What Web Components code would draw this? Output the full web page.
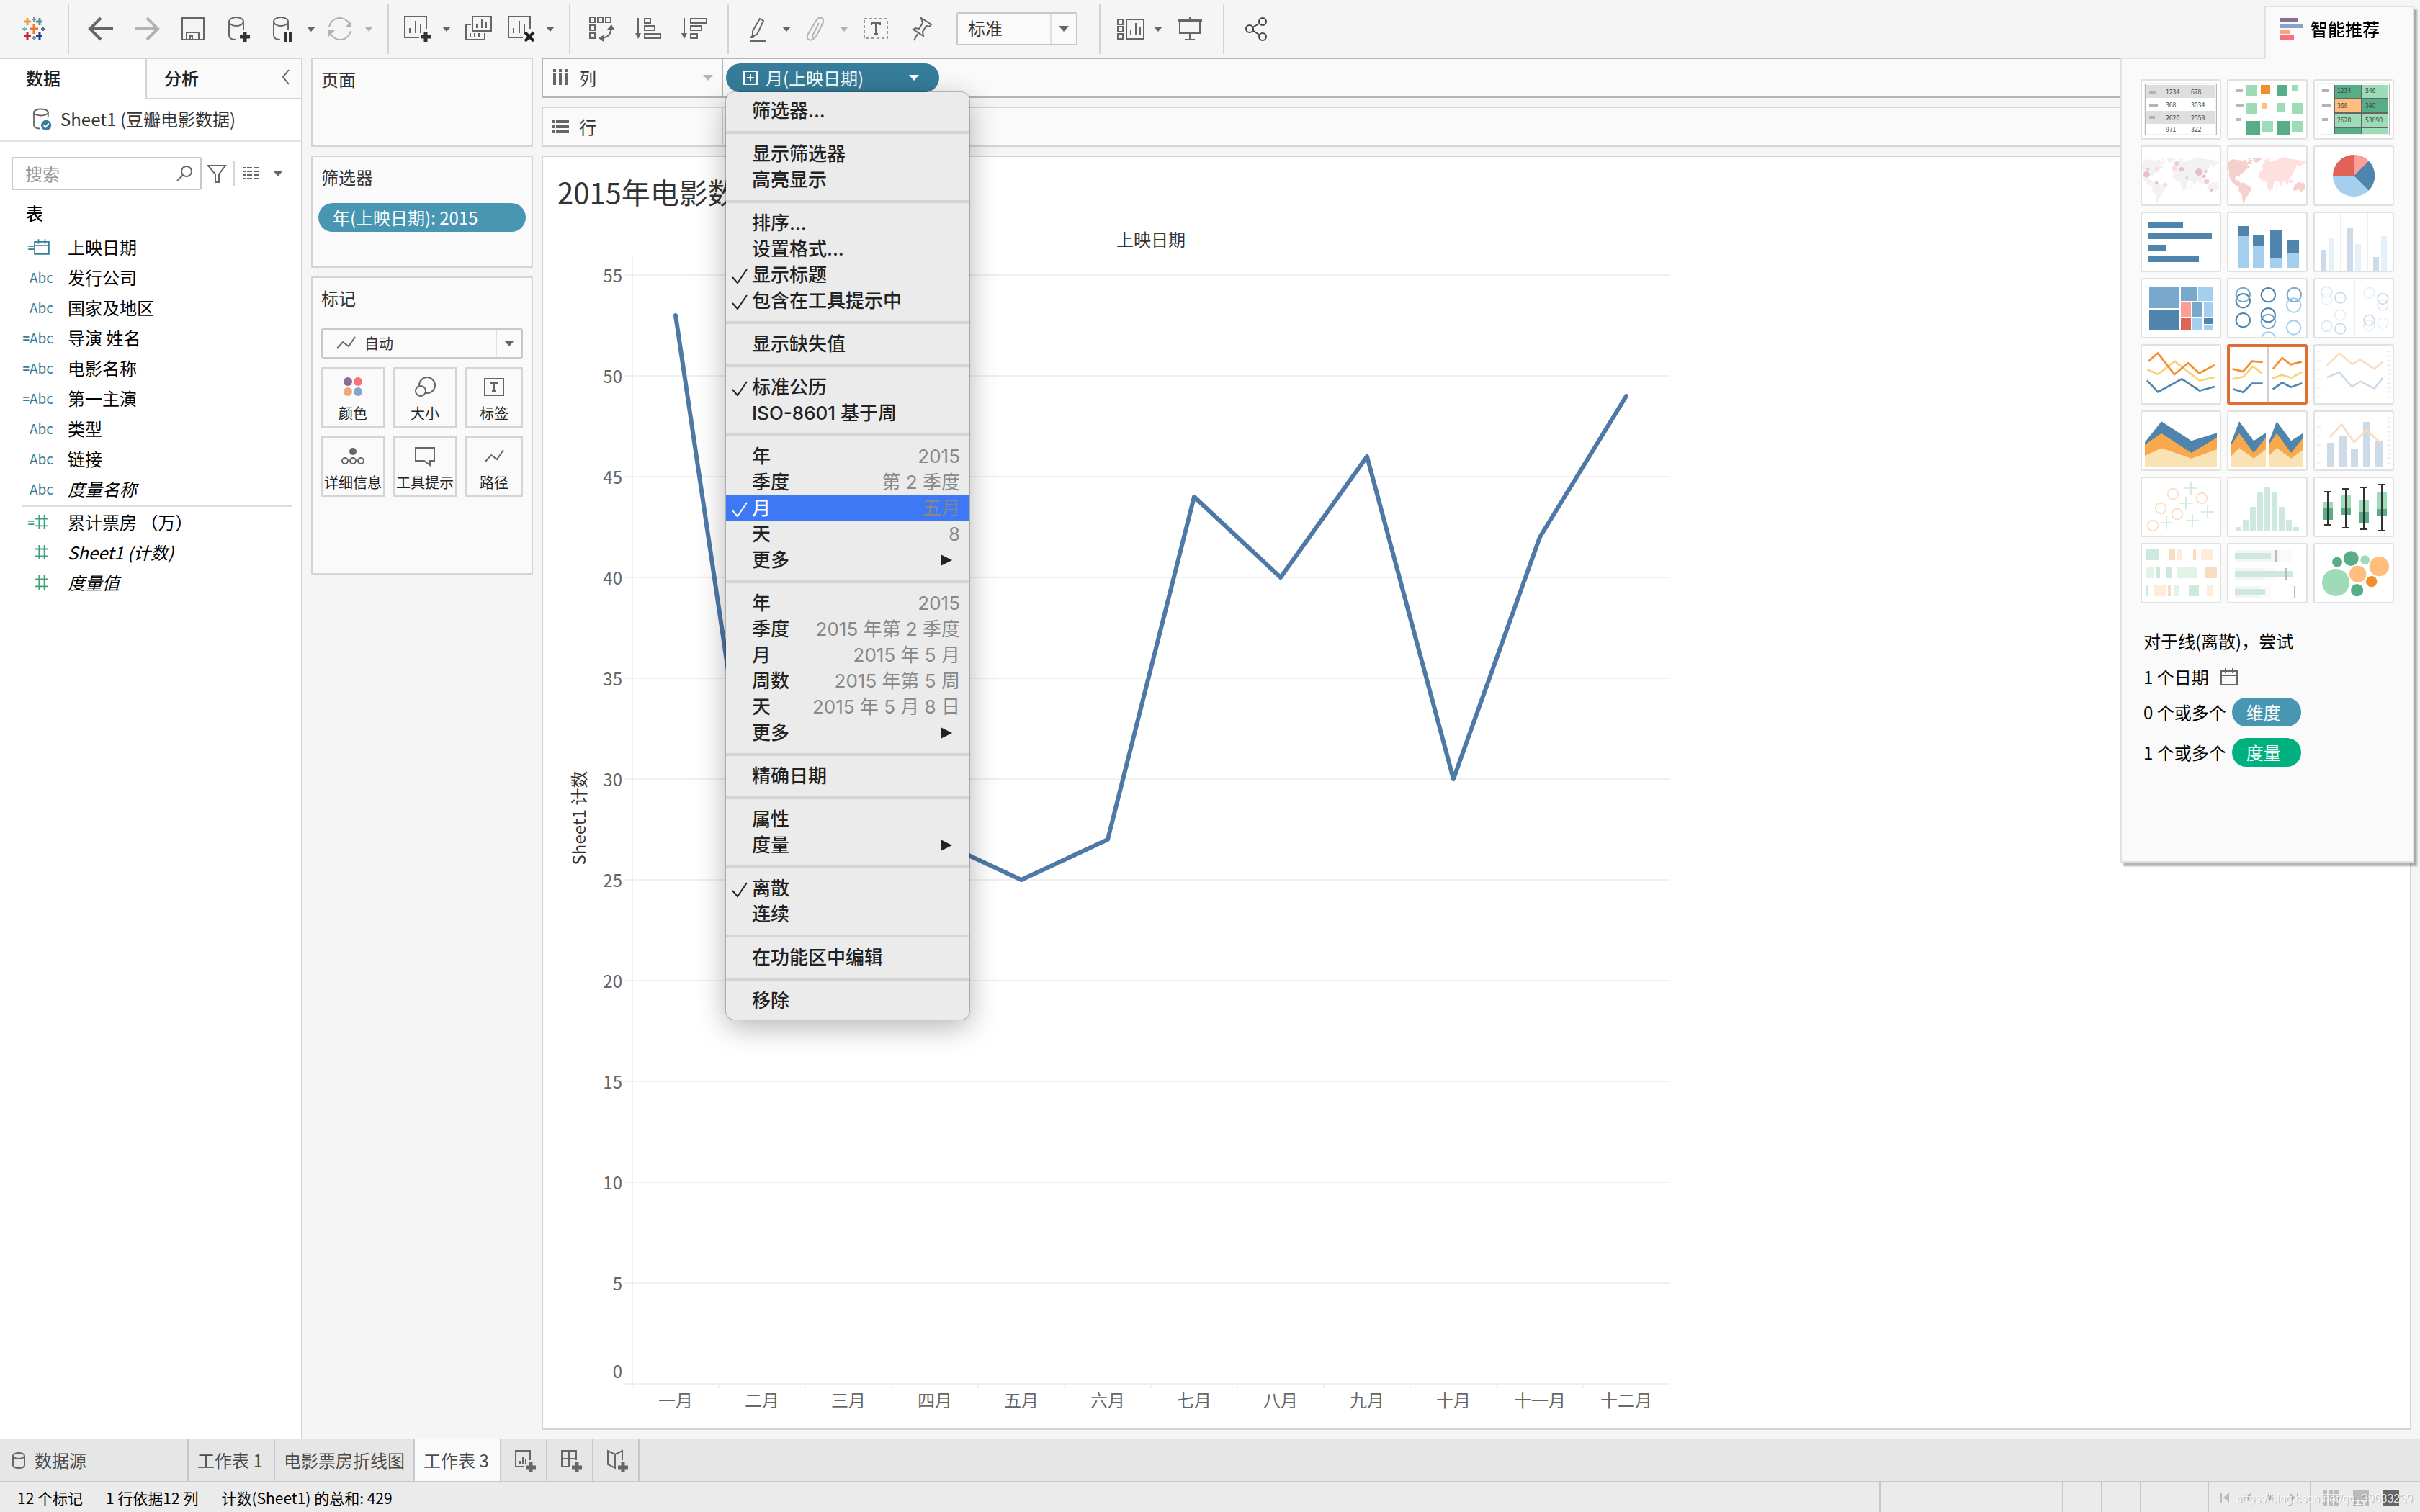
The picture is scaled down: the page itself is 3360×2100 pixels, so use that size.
<!DOCTYPE html>
<html lang="zh-CN">
<head>
<meta charset="utf-8">
<title>工作表 3</title>
<style>
  html, body {
    margin: 0;
    padding: 0;
  }
  body {
    font-family: "Noto Sans CJK SC", "Open Sans", sans-serif;
    font-size: 24px;
    line-height: 32px;
    color: #333;
    background: #f5f5f5;
    --line: #d4d4d4;
    --card: #fafafa;
    --pill-blue: #4996b2;
    --pill-green: #00b180;
    --icon: #666;
  }
</style>
</head>
<body>
<workbook-app></workbook-app>

<script>
/* ---------- icons ---------- */

const PLUS = (x, y, c = '#333') => `<path d="M${x - 7} ${y}h14M${x} ${y - 7}v14" stroke="${c}" stroke-width="5"/>`
const CYLINDER = `<ellipse cx="16" cy="10" rx="10" ry="6"/><path d="M6 10v19q0 6 9 6M26 10v12"/>`
const SHEET = `<path d="M32 20V3H2v29h20"/><path d="M9 19v7M17 9v17M24 13v13" stroke-width="2"/>`

const ICONS = {
  logo: `<g stroke-width="3">
    <path d="M14 20h12M20 13v14" stroke="#eb7a2c"/>
    <path d="M7 10h9M11 5v10" stroke="#f09a37"/><path d="M23 10h9M28 5v10" stroke="#5b8d9e"/>
    <path d="M7 30h9M11 25v10" stroke="#c8213c"/><path d="M23 30h9M28 25v10" stroke="#1f457e"/>
    <path d="M17 7h6M20 4v6" stroke="#7199a6" stroke-width="2"/><path d="M17 33h6M20 30v6" stroke="#8a8fb5" stroke-width="2"/>
    <path d="M4 20h6M7 17v6" stroke="#7bb4c4" stroke-width="2"/><path d="M30 20h6M33 17v6" stroke="#5a6b9c" stroke-width="2"/></g>`,
  back: `<path d="M20 5L5 20l15 15M5 20h32" stroke-width="4"/>`,
  forward: `<g stroke="#b3b3b3"><path d="M20 5l15 15-15 15M35 20H3" stroke-width="4"/></g>`,
  save: `<path d="M5 5h30v30H5zM11 35V25h17v10M16 35v-5h3v5"/>`,
  dbAdd: CYLINDER + PLUS(28, 31),
  dbPause: `<g transform="translate(2)">${CYLINDER}</g><path d="M24 25v13M31 25v13" stroke="#333" stroke-width="4"/>`,
  refresh: `<g stroke="#b3b3b3"><path d="M5 17A15 15 0 0 1 33 13M35 23A15 15 0 0 1 7 27"/>
    <path d="M36 9v9h-9zM4 31v-9h9z" fill="#b3b3b3" stroke="none"/></g>`,
  sheetAdd: SHEET + PLUS(31, 31),
  sheetCopy: `<path d="M12 3h26v20H12zM10 14H3v21h26v-9"/><path d="M18 13v6M25 7v12M31 11v8M9 26v5M15 26v5M21 26v5" stroke-width="2"/>`,
  sheetClear: SHEET + `<path d="M25 25l12 12M37 25L25 37" stroke="#222" stroke-width="4"/>`,
  swap: `<path d="M3 4h7v7H3zM14 4h7v7h-7zM25 4h7v7h-7zM3 15h7v7H3zM3 26h7v7H3z"/><path d="M32 19q1 12-12 14"/>
    <path d="M27 21l6-7 4 7zM22 38l-7-5 8-5z" fill="#666" stroke="none"/>`,
  sortAsc: `<path d="M6 5v24"/><path d="M2 26h8l-4 8z" fill="#666" stroke="none"/><path d="M15 6h8v6h-8zM15 16h14v6H15zM15 27h22v6H15z"/>`,
  sortDesc: `<path d="M6 5v24"/><path d="M2 26h8l-4 8z" fill="#666" stroke="none"/><path d="M15 6h22v6H15zM15 16h15v6H15zM15 27h9v6h-9z"/>`,
  highlight: `<path d="M23 6l5 3-9 19-6 2v-7z"/><path d="M10 31l3-3 3 3-2 2h-4z" fill="#666" stroke="none"/><path d="M9 37h22" stroke-width="3"/>`,
  clip: `<g stroke="#b3b3b3"><path d="M25 12l-8 16q-2 3 0 4 3 1 5-3l8-16q3-6-1-8-4-2-8 4L10 27q-3 6 1 8 5 2 8-3"/></g>`,
  textMark: `<path d="M4 6h32v27H4z" stroke-dasharray="4 3" stroke="#999"/><path d="M14 15v-3h12v3M20 12v15M17 27h6" stroke-width="2"/>`,
  pin: `<path d="M19 5l14 9-3 3-4-1-5 8 1 6-14-9 3-2 5 1 5-8zM14 27L9 36"/>`,
  cards: `<path d="M4 7h7v7H4zM4 17h7v7H4zM4 27h7v7H4zM16 7h24v27H16z"/><path d="M22 21v8M29 12v17M35 17v12"/>`,
  present: `<path d="M3 9h34" stroke-width="4"/><path d="M6 10v16h28V10M20 4v4M20 26v9M13 35h14"/>`,
  share: `<g stroke="#444"><circle cx="11" cy="20" r="5"/><circle cx="29" cy="10" r="5"/><circle cx="29" cy="31" r="5"/><path d="M15 18l9-5M15 22l9 6"/></g>`,
  source: `<g stroke-width="2"><path d="M32 17V10M10 10v20q0 5 9 5"/><ellipse cx="21" cy="10" rx="11" ry="5"/></g><circle cx="29" cy="30" r="8" fill="#357f9e" stroke="none"/><path d="M25 30l3 3 5-6" stroke="#fff"/>`,
  db: `<ellipse cx="20" cy="14" rx="8" ry="4"/><path d="M12 14v13q0 4 8 4t8-4V14"/>`,
  search: `<circle cx="23" cy="17" r="7"/><path d="M18 22l-8 8"/>`,
  filter: `<path d="M8 9h24l-9 12v11h-5V21z"/>`,
  list: `<path d="M8 12h24M8 17h24M8 22h24M8 27h24" stroke-dasharray="4 2 7 2 7 2"/>`,
  collapse: `<path d="M25 9l-8 10 8 10"/>`,
  columns: `<path d="M12 14v16M20 14v16M28 14v16M12 8v4M20 8v4M28 8v4" stroke-width="4"/>`,
  rows: `<path d="M14 13h18M14 20h18M14 27h18M8 13h4M8 20h4M8 27h4" stroke-width="4"/>`,
  calendar: `<path d="M9 12h22v19H9zM9 18h22M15 8v7M25 8v7"/>`,
  number: `<path d="M10 15h20M10 26h20M16 9v22M24 9v22"/>`,
  line: `<path d="M8 27l8-9 8 6 9-13"/>`,
  color: `<g stroke="none"><circle cx="13" cy="12" r="6" fill="#856f98"/><circle cx="27" cy="12" r="6" fill="#fb7080"/>
    <circle cx="13" cy="26" r="6" fill="#f3a57c"/><circle cx="27" cy="26" r="6" fill="#83a5cb"/></g>`,
  size: `<circle cx="23" cy="17" r="11"/><circle cx="14" cy="25" r="7" fill="#fafafa"/>`,
  label: `<path d="M7 8h26v23H7z"/><path d="M15 16v-2h10v2M20 14v11M17 25h6"/>`,
  detail: `<circle cx="20" cy="13" r="5" fill="#666" stroke="none"/><circle cx="9" cy="26" r="4"/><circle cx="20" cy="26" r="4"/><circle cx="31" cy="26" r="4"/>`,
  tooltip: `<path d="M7 8h26v18h-6v6l-8-6H7z"/>`,
  tabSheet: `<path d="M28 20V7H8v22h12"/><path d="M14 21v4M18 15v10M22 18v7"/>` + PLUS(29, 30, '#666'),
  tabBoard: `<path d="M28 20V7H8v22h12M18 7v22M8 18h20"/>` + PLUS(29, 30, '#666'),
  tabStory: `<path d="M28 20V7l-10 5L8 7v19l10 5V12"/>` + PLUS(29, 30, '#666')
}

/* ---------- small building blocks ---------- */

class BaseElement extends HTMLElement {
  connectedCallback() {
    if(this.shadowRoot) return
    this.attachShadow({ mode: 'open' })
    const template = document.createElement('template')
    template.innerHTML = `
      <style>
        * { box-sizing: border-box; }
        :host { display: block; box-sizing: border-box; }
        button, select, input { font: inherit; color: inherit; margin: 0; padding: 0; border: 0; background: none; outline: none; border-radius: 0; }
        h2, h3, p, ul { margin: 0; padding: 0; font-weight: inherit; font-size: inherit; }
        ul { list-style: none; }
        ${this.getStyles()}
      </style>
      ${this.getTemplate()}`
    this.shadowRoot.appendChild(template.content.cloneNode(true))
  }
  getStyles() { return '' }
  getTemplate() { return '' }
}

class UiIcon extends BaseElement {
  getStyles() {
    return `
      :host { flex: none; width: 40px; height: 40px; }
      svg { display: block; width: 100%; height: 100%; overflow: visible; }
    `
  }
  getTemplate() {
    return `<svg viewBox="0 0 40 40" fill="none" stroke="${this.getAttribute('color') || '#666'}" stroke-width="2">${ICONS[this.getAttribute('name')]}</svg>`
  }
}
customElements.define('ui-icon', UiIcon)

class UiCaret extends BaseElement {
  getStyles() {
    return `
      :host { flex: none; width: 14px; height: 8px; color: var(--icon); pointer-events: none; }
      :host([small]) { width: 12px; height: 7px; }
      :host([muted]) { color: #b3b3b3; }
      :host([light]) { color: #fff; }
      svg { display: block; width: 100%; height: 100%; }
    `
  }
  getTemplate() {
    return `<svg viewBox="0 0 14 8" preserveAspectRatio="none"><path d="M0 0h14L7 8z" fill="currentColor"/></svg>`
  }
}
customElements.define('ui-caret', UiCaret)

/* A field token: the label goes into the slot */
class FieldPill extends BaseElement {
  getStyles() {
    return `
      :host {
        display: flex;
        align-items: center;
        height: 40px;
        padding: 0 20px;
        border-radius: 20px;
        color: #fff;
        background: var(--pill-blue);
      }
      :host([kind="measure"]) { background: var(--pill-green); }
      :host([active]) { background: #357d9b; }
    `
  }
  getTemplate() { return `<slot></slot>` }
}
customElements.define('field-pill', FieldPill)

class CardBox extends BaseElement {
  getStyles() {
    return `
      :host { border: 2px solid var(--line); background: var(--card); padding: 10px 8px; }
      h3 { padding: 0 4px; line-height: 36px; }
    `
  }
  getTemplate() { return `<h3>${this.getAttribute('heading')}</h3><slot></slot>` }
}
customElements.define('card-box', CardBox)

/* ---------- toolbar ---------- */

class ToolBar extends BaseElement {
  getStyles() {
    return `
      :host { display: flex; align-items: center; height: 80px; }
      button { display: flex; align-items: center; justify-content: center; height: 64px; width: 64px; }
      .mid { width: 56px; }
      .caret { width: 24px; }
      .logo { width: 94px; }
      i { width: 2px; height: 70px; margin: 0 12px 0 14px; background: var(--line); }
      .logo + i { margin-left: 0; }
      label { position: relative; display: flex; align-items: center; margin: 0 16px; }
      select {
        appearance: none;
        width: 168px;
        height: 46px;
        padding: 0 50px 2px 14px;
        border: 2px solid #c8c8c8;
        border-radius: 3px;
        background: linear-gradient(#e1e1e1, #e1e1e1) right 34px top / 2px 100% no-repeat #fafafa;
      }
      label ui-caret { position: absolute; right: 12px; }
    `
  }
  getTemplate() {
    const btn = (icon, label, cls = '') => `<button class="${cls}" aria-label="${label}"><ui-icon name="${icon}"></ui-icon></button>`
    const caret = (muted = '') => `<button class="caret" aria-label="展开"><ui-caret small ${muted}></ui-caret></button>`
    return `
      ${btn('logo', '起始页', 'logo')}<i></i>
      ${btn('back', '撤消')}${btn('forward', '重做')}${btn('save', '保存')}${btn('dbAdd', '新建数据源')}
      ${btn('dbPause', '暂停自动更新', 'mid')}${caret()}${btn('refresh', '运行更新', 'mid')}${caret('muted')}<i></i>
      ${btn('sheetAdd', '新建工作表', 'mid')}${caret()}${btn('sheetCopy', '复制')}${btn('sheetClear', '清除', 'mid')}${caret()}<i></i>
      ${btn('swap', '交换行和列')}${btn('sortAsc', '升序')}${btn('sortDesc', '降序')}<i></i>
      ${btn('highlight', '突出显示', 'mid')}${caret()}${btn('clip', '分组成员', 'mid')}${caret('muted')}${btn('textMark', '显示标记标签')}${btn('pin', '固定轴')}
      <label><select aria-label="适合"><option>标准</option></select><ui-caret></ui-caret></label><i></i>
      ${btn('cards', '显示/隐藏卡', 'mid')}${caret()}${btn('present', '演示模式')}<i></i>
      ${btn('share', '共享')}
    `
  }
}
customElements.define('tool-bar', ToolBar)

/* ---------- data pane ---------- */

const FIELDS = [
  { icon: 'calendar', calc: true, name: '上映日期' },
  { name: '发行公司' },
  { name: '国家及地区' },
  { calc: true, name: '导演 姓名' },
  { calc: true, name: '电影名称' },
  { calc: true, name: '第一主演' },
  { name: '类型' },
  { name: '链接' },
  { name: '度量名称', generated: true }
]
const MEASURES = [
  { icon: 'number', calc: true, name: '累计票房 （万）' },
  { icon: 'number', name: 'Sheet1 (计数)', generated: true },
  { icon: 'number', name: '度量值', generated: true }
]

class DataPane extends BaseElement {
  getStyles() {
    return `
      :host { width: 420px; flex: none; background: #fff; border: solid var(--line); border-width: 2px 2px 0 0; color: #000; }
      .tabs { display: flex; height: 56px; }
      .tabs button { text-align: left; padding: 0 0 4px 36px; width: 202px; color: #222; font-weight: 500; }
      .tabs .off { flex: 1; display: flex; align-items: center; justify-content: space-between; padding: 0 2px 2px 24px; background: var(--card); border: solid var(--line); border-width: 0 0 2px 2px; }
      .source { display: flex; align-items: center; gap: 10px; height: 59px; padding: 0 0 4px 38px; border-bottom: 2px solid #e4e4e4; color: #333; }
      .source ui-icon { width: 36px; height: 36px; }
      .search { display: flex; align-items: center; padding: 21px 16px 0; }
      label { position: relative; width: 264px; height: 46px; }
      input { width: 100%; height: 46px; border: 2px solid #c8c8c8; border-radius: 3px; padding: 0 50px 2px 17px; }
      input::placeholder { color: #999; opacity: 1; }
      label ui-icon { position: absolute; right: 4px; top: 3px; }
      .search i { width: 2px; height: 36px; background: var(--line); margin-left: 3px; }
      .search > ui-icon { margin-left: 1px; }
      .search i + ui-icon { margin-left: 3px; }
      .search ui-caret { margin-left: 10px; }
      h3 { padding-left: 36px; margin-top: 16px; line-height: 32px; font-weight: 500; }
      ul { padding-top: 10px; }
      li { display: flex; align-items: center; height: 42px; color: #000; }
      .kind { width: 94px; padding-right: 20px; display: flex; align-items: center; justify-content: flex-end; font-size: 19px; color: #357d9b; }
      .kind ui-icon { width: 36px; height: 36px; margin-right: -2px; }
      .eq { font-size: 16px; font-weight: 700; }
      .icon .eq { margin-right: -8px; }
      .measure .kind { color: #3ba277; }
      .measure { margin: 2px 12px 0 30px; border-top: 2px solid #dcdcdc; padding-top: 0; }
      .measure li { margin-left: -30px; }
      .generated { font-style: italic; }
      .kind { font-style: normal; }
    `
  }
  row(f, color) {
    return `<li class="${f.generated ? 'generated' : ''}"><span class="kind ${f.icon ? 'icon' : ''}">${f.calc ? '<span class="eq">=</span>' : ''}${f.icon ? `<ui-icon name="${f.icon}" color="${color}"></ui-icon>` : 'Abc'}</span>${f.name}</li>`
  }
  getTemplate() {
    return `
      <div class="tabs"><button>数据</button><button class="off">分析<ui-icon name="collapse"></ui-icon></button></div>
      <div class="source"><ui-icon name="source"></ui-icon>Sheet1 (豆瓣电影数据)</div>
      <div class="search">
        <label><input type="text" placeholder="搜索" aria-label="搜索"><ui-icon name="search"></ui-icon></label>
        <ui-icon name="filter"></ui-icon><i></i><ui-icon name="list"></ui-icon><ui-caret></ui-caret>
      </div>
      <h3>表</h3>
      <ul>${FIELDS.map(f => this.row(f, '#357d9b')).join('')}</ul>
      <ul class="measure">${MEASURES.map(f => this.row(f, '#3ba277')).join('')}</ul>
    `
  }
}
customElements.define('data-pane', DataPane)

/* ---------- pages / filters / marks ---------- */

class CardColumn extends BaseElement {
  getStyles() {
    return `
      :host { display: flex; flex-direction: column; gap: 12px; width: 308px; flex: none; margin-left: 12px; }
      .pages { min-height: 124px; }
      .filters { min-height: 156px; }
      .marks { min-height: 414px; }
      .filters field-pill { margin-top: 18px; }
      .type { position: relative; display: flex; align-items: center; margin: 24px 4px 12px; }
      .type ui-icon { position: absolute; left: 14px; }
      .type ui-caret { position: absolute; right: 12px; }
      select {
        appearance: none;
        width: 100%;
        height: 42px;
        padding-left: 58px;
        font-size: 20px;
        border: 2px solid #c8c8c8;
        border-radius: 3px;
        background: linear-gradient(#e1e1e1, #e1e1e1) right 34px top / 2px 100% no-repeat #fafafa;
      }
      .grid { display: grid; grid-template-columns: 88px 88px 80px; gap: 12px; padding: 0 4px; }
      .grid button { height: 84px; border: 2px solid var(--line); font-size: 20px; line-height: 28px; white-space: nowrap; display: flex; flex-direction: column; align-items: center; padding-top: 6px; gap: 2px; color: #222; }
    `
  }
  getTemplate() {
    const marks = [['color', '颜色'], ['size', '大小'], ['label', '标签'], ['detail', '详细信息'], ['tooltip', '工具提示'], ['line', '路径']]
    return `
      <card-box class="pages" heading="页面"></card-box>
      <card-box class="filters" heading="筛选器"><field-pill>年(上映日期): 2015</field-pill></card-box>
      <card-box class="marks" heading="标记">
        <label class="type"><select aria-label="标记类型"><option>自动</option></select><ui-icon name="line"></ui-icon><ui-caret></ui-caret></label>
        <div class="grid">${marks.map(m => `<button><ui-icon name="${m[0]}"></ui-icon>${m[1]}</button>`).join('')}</div>
      </card-box>
    `
  }
}
customElements.define('card-column', CardColumn)

/* ---------- context menu ---------- */

// each entry: [label, hint, flags]   c = checked, s = submenu, h = highlighted
const MENU = [
  [['筛选器...']],
  [['显示筛选器'], ['高亮显示']],
  [['排序...'], ['设置格式...'], ['显示标题', '', 'c'], ['包含在工具提示中', '', 'c']],
  [['显示缺失值']],
  [['标准公历', '', 'c'], ['ISO-8601 基于周']],
  [['年', '2015'], ['季度', '第 2 季度'], ['月', '五月', 'ch'], ['天', '8'], ['更多', '', 's']],
  [['年', '2015'], ['季度', '2015 年第 2 季度'], ['月', '2015 年 5 月'], ['周数', '2015 年第 5 周'], ['天', '2015 年 5 月 8 日'], ['更多', '', 's']],
  [['精确日期']],
  [['属性'], ['度量', '', 's']],
  [['离散', '', 'c'], ['连续']],
  [['在功能区中编辑']],
  [['移除']]
]

class ContextMenu extends BaseElement {
  getStyles() {
    return `
      :host {
        width: 338px;
        padding: 8px 0;
        border-radius: 12px;
        background: #ebebeb;
        color: #222;
        font-family: Inter, "Noto Sans CJK SC", sans-serif;
        font-size: 26px;
        font-weight: 500;
        box-shadow: 0 0 0 1px rgba(0, 0, 0, .22), 0 10px 40px rgba(0, 0, 0, .3);
      }
      button { display: flex; align-items: center; width: 100%; height: 36px; line-height: 36px; padding: 0 13px 0 8px; text-align: left; white-space: nowrap; }
      .check { width: 24px; margin-right: 4px; flex: none; }
      svg { display: block; }
      .check svg { margin-top: 4px; }
      .hint { margin-left: auto; color: #888; font-weight: 400; }
      .sub { margin-left: auto; margin-right: 11px; }
      .hot { background: #3f78f4; color: #fff; }
      hr { margin: 10px 0; border: 0; height: 4px; background: var(--line); }
    `
  }
  item([label, hint = '', flags = '']) {
    const check = flags.includes('c') ? `<svg width="24" height="24" viewBox="0 0 24 24" fill="none" stroke="currentColor" stroke-width="2"><path d="M1 13l7 8L21 2"/></svg>` : ''
    const end = flags.includes('s') ? `<svg class="sub" width="16" height="16"><path d="M0 0l16 8-16 8z" fill="#222"/></svg>` : hint ? `<span class="hint">${hint}</span>` : ''
    return `<button role="menuitem" class="${flags.includes('h') ? 'hot' : ''}"><span class="check">${check}</span>${label}${end}</button>`
  }
  getTemplate() {
    return MENU.map(group => group.map(i => this.item(i)).join('')).join('<hr>')
  }
}
customElements.define('context-menu', ContextMenu)

/* ---------- shelves ---------- */

class ShelfRow extends BaseElement {
  getStyles() {
    return `
      :host { display: flex; height: 56px; border: 2px solid var(--line); background: var(--card); }
      :host([active]) { border-color: #b3b3b3; }
      .name { width: 250px; flex: none; display: flex; align-items: center; gap: 6px; padding: 0 12px 0 4px; border-right: 2px solid var(--line); }
      :host([active]) .name { border-color: #b3b3b3; }
      ui-caret { margin-left: auto; }
      .drop { flex: 1; display: flex; align-items: center; padding: 0 4px; }
    `
  }
  getTemplate() {
    return `<div class="name"><ui-icon name="${this.getAttribute('icon')}"></ui-icon>${this.getAttribute('heading')}${this.hasAttribute('active') ? '<ui-caret muted></ui-caret>' : ''}</div>
      <div class="drop"><slot></slot></div>`
  }
}
customElements.define('shelf-row', ShelfRow)

/* ---------- line chart ---------- */

class LineChart extends BaseElement {
  getStyles() {
    return `
      :host { color: #666; }
      svg { display: block; }
      text { font-size: 24px; fill: currentColor; }
      .title { fill: #333; }
    `
  }
  getTemplate() {
    const months = ['一月', '二月', '三月', '四月', '五月', '六月', '七月', '八月', '九月', '十月', '十一月', '十二月']
    const values = [53, 24, 22, 27, 25, 27, 44, 40, 46, 30, 42, 49]
    const left = 124, bottom = 1630, step = 120, unit = 28
    const right = left + step * months.length
    let out = ''
    for(let v = 0; v <= 55; v += 5) {
      const y = bottom - v * unit
      out += `<path d="M${left - 11} ${y}H${right}" stroke="#f0f0f0" stroke-width="2"/>`
      out += `<text x="${left - 14}" y="${v ? y + 10 : y - 8}" text-anchor="end">${v}</text>`
    }
    months.forEach((m, i) => {
      out += `<path d="M${left + i * step} ${bottom}v6" stroke="#f0f0f0" stroke-width="2"/>`
      out += `<text x="${left + 60 + i * step}" y="${bottom + 32}" text-anchor="middle">${m}</text>`
    })
    const points = values.map((v, i) => `${left + 60 + i * step},${bottom - v * unit}`).join(' ')
    return `
      <svg width="1600" height="1690" viewBox="0 0 1600 1690">
        <text class="title" x="${(left + right) / 2}" y="50" text-anchor="middle">上映日期</text>
        <text class="title" transform="translate(59 844) rotate(-90)" text-anchor="middle">Sheet1 计数</text>
        <path d="M${left} 62V${bottom}" stroke="#f0f0f0" stroke-width="2"/>
        ${out}
        <polyline points="${points}" fill="none" stroke="#4e79a7" stroke-width="6" stroke-linejoin="round" stroke-linecap="round"/>
      </svg>`
  }
}
customElements.define('line-chart', LineChart)

class WorkSpace extends BaseElement {
  getStyles() {
    return `
      :host { flex: 1; min-width: 0; display: flex; flex-direction: column; gap: 12px; margin: 0 12px 12px; }
      .token { position: relative; z-index: 2; }
      .token field-pill { width: 296px; padding: 0 28px 0 24px; }
      .token field-pill svg { margin-right: 11px; }
      .token ui-caret { margin-left: auto; }
      context-menu { position: absolute; left: 0; top: 100%; }
      .view { flex: 1; background: #fff; border: 2px solid var(--line); padding-top: 24px; overflow: hidden; }
      h2 { font-size: 40px; line-height: 48px; padding: 0 0 2px 20px; }
    `
  }
  getTemplate() {
    return `
      <shelf-row active icon="columns" heading="列">
        <div class="token">
          <field-pill active>
            <svg width="20" height="20" fill="none" stroke="#fff" stroke-width="2"><path d="M1 1h18v18H1zM10 5v10M5 10h10"/></svg>
            月(上映日期)<ui-caret light></ui-caret>
          </field-pill>
          <context-menu role="menu"></context-menu>
        </div>
      </shelf-row>
      <shelf-row icon="rows" heading="行"></shelf-row>
      <div class="view">
        <h2>2015年电影数量按月份变化趋势</h2>
        <line-chart></line-chart>
      </div>
    `
  }
}
customElements.define('work-space', WorkSpace)

/* ---------- show me ---------- */

const rects = (fill, list) => list.map(r => `<rect x="${r[0]}" y="${r[1]}" width="${r[2]}" height="${r[3]}" fill="${fill}"/>`).join('')
const rings = (stroke, r, list, w = 5) => list.map(c => `<circle cx="${c[0]}" cy="${c[1]}" r="${r}" fill="none" stroke="${stroke}" stroke-width="${w}"/>`).join('')
const dots = list => list.map(c => `<circle cx="${c[0]}" cy="${c[1]}" r="${c[2]}" fill="${c[3]}"/>`).join('')
const poly = (stroke, pts, w = 8) => `<polyline points="${pts}" fill="none" stroke="${stroke}" stroke-width="${w}"/>`
const area = (fill, pts) => `<polygon points="${pts}" fill="${fill}"/>`
const nums = list => list.map(t => `<text x="${t[0]}" y="${t[1]}">${t[2]}</text>`).join('')

const worldMap = (americas, rest) => `
  <path fill="${americas}" d="M12 62l12-5 22 4 20 2 10-5 8 6-2 10 8-8 8-8 12 4-12 6 8 6-6 6-8-4-8 6 12 6-4 8-12 2-8 10-8 8-10 6-2 10-4-8-10 4-4 8 4 8 10 2 6 8 6 3 10-3 16 12 16 10-2 12-8 8-4 12-8 6-4 12-4 14 2 8-6-4-4-18-2-22-10-10-4-12 2-8-14-8-14-12-8-14-6-14 2-22-6-8-12 2 4-10zM86 51l10 0 2 6-8 2zM102 51h44l-4 8-10 6-8 8-8-4-4-10zM276 180l6-16 14-10 12-2 4 8 6-10 6 14 2 12-8 12-10 6-8-10-10 2-12 4z"/>
  <path fill="${rest}" d="M150 96l-8-2 2-10 6-2 4-18 14-10 10 4-2 12 12-6 22-4 14-8 20-4 18 8 22 2 24 4 18 2-2 14-12 2-8 12-4-8-10-2-2 10-8 14-6 14-8 10-6 12-8 4 4 12-6 6-8-12-6-4-8 12-2 12-6-12-6-12-16-2-4 14-10 4-8-14-6-14-12 2-6-8-6 6-8-8-10 8zM136 110l20-6 16 4 16 6 8 16 12 2-8 14-6 14-2 18-12 10-8-2-6-22-2-16-16-2-14-14zM206 170l6-6-2 14-6 8zM252 140l8 8 10-6 6 12-14 4-8-8z"/>`

const SHADE = { b: '#4f84ad', l: '#a4cfef', m: '#79a8cd', o: '#f28e2b', y: '#f8d277', g: '#9edcb7', d: '#57ad88', n: '#ffbe7d' }
const axisTicks = rects('#eee', [[15, 28, 18, 6], [15, 67, 18, 6], [15, 103, 18, 6], [15, 142, 18, 6], [15, 178, 18, 6], [15, 217, 18, 6],
  [306, 28, 18, 6], [306, 46, 18, 6], [306, 67, 18, 6], [306, 85, 18, 6], [306, 103, 18, 6], [306, 121, 18, 6], [306, 142, 18, 6], [306, 160, 18, 6], [306, 178, 18, 6], [306, 196, 18, 6], [306, 217, 18, 6]])
const stackedArea = `${area(SHADE.b, '0,87 69,0 194,81 300,48 300,188 0,188')}${area('#f9a94b', '0,97 69,49 194,131 300,67 300,188 0,188')}${area('#f9e2b4', '0,143 69,111 194,154 300,117 300,188 0,188')}`
const boxPlot = (x, top, mid, bot, hi, lo) => rects(SHADE.g, [[x - 21, top, 42, mid - top]]) + rects(SHADE.d, [[x - 21, mid, 42, bot - mid]]) +
  `<path d="M${x} ${hi}V${lo}M${x - 15} ${hi}h30M${x - 15} ${lo}h30" stroke="#333" stroke-width="6"/>`

// drawings in a 336 x 252 box, border included
const THUMBS = [
  { name: '文本表', art: `<rect x="19" y="19" width="297" height="213" fill="none" stroke="#aaa" stroke-width="3"/>
    ${rects('#dedede', [[24, 24, 288, 54], [24, 132, 288, 54]])}${rects('#b3b3b3', [[36, 48, 30, 12], [36, 102, 36, 12], [36, 153, 24, 12]])}
    ${nums([[105, 62, 1234], [210, 62, 678], [105, 116, 368], [210, 116, 3034], [105, 170, 2620], [210, 170, 2559], [105, 218, 971], [210, 218, 322]])}` },
  { name: '热图', art: `${rects('#b9b9b9', [[36, 42, 30, 12], [36, 102, 36, 12], [36, 162, 24, 12]])}${rects(SHADE.g, [[81, 24, 45, 45], [270, 24, 24, 24], [81, 99, 45, 45], [207, 99, 36, 36], [270, 99, 45, 45], [144, 174, 48, 48], [270, 174, 45, 45]])}
    ${rects(SHADE.d, [[207, 24, 45, 45], [81, 174, 57, 57], [207, 174, 57, 57]])}${rects(SHADE.o, [[141, 24, 39, 39]])}${rects(SHADE.n, [[144, 99, 24, 24]])}` },
  { name: '突出显示表', art: `<rect x="19" y="19" width="297" height="213" fill="none" stroke="#aaa" stroke-width="3"/>
    ${rects('#b3b3b3', [[36, 42, 30, 12], [36, 102, 36, 12], [36, 162, 24, 12]])}${rects(SHADE.d, [[87, 24, 114, 54], [201, 84, 111, 54], [87, 204, 114, 24]])}
    ${rects(SHADE.g, [[201, 24, 111, 54], [87, 144, 114, 54], [201, 144, 111, 54], [201, 204, 111, 24]])}${rects(SHADE.n, [[87, 84, 114, 54]])}
    <path d="M87 24v204M201 24v204M84 81h228M84 141h228M84 201h228" stroke="#666" stroke-width="6"/>
    ${nums([[99, 57, 1234], [216, 57, 546], [99, 120, 368], [216, 120, 340], [99, 180, 2620], [216, 180, 53890]])}` },
  { name: '符号地图', art: worldMap('#f2f2f2', '#f2f2f2') + dots([[25, 120, 13, '#e9bfc6'], [31, 98, 6, '#e9bfc6'], [69, 99, 10, '#fcdcdc'], [150, 75, 9, '#f3cdcd'], [141, 96, 10, '#fcdcdc'], [171, 99, 9, '#e9bfc6'], [243, 111, 15, '#e9bfc6'], [271, 108, 7, '#f6cccc'], [265, 129, 7, '#e9bfc6'], [275, 149, 11, '#f3cdcd'], [193, 135, 6, '#f6cccc'], [67, 156, 7, '#e9bfc6'], [102, 165, 10, '#fcdcdc'], [295, 186, 6, '#e9bfc6']]) },
  { name: '地图', art: worldMap('#f6d0ce', '#ffe0e0') },
  { name: '饼图', art: `<path d="M168 126V39A87 87 0 0 0 81 126z" fill="#e16358"/><path d="M168 126H81a87 87 0 0 0 148 62z" fill="${SHADE.l}"/><path d="M168 126l62 62a87 87 0 0 0 0-124z" fill="${SHADE.b}"/><path d="M168 126l62-62a87 87 0 0 0-62-25z" fill="#ff9d9a"/>` },
  { name: '水平条', art: rects(SHADE.b, [[33, 42, 144, 24], [33, 90, 264, 24], [33, 138, 72, 24], [33, 186, 210, 24]]) },
  { name: '堆叠条', art: rects(SHADE.b, [[45, 60, 48, 42], [108, 96, 48, 48], [180, 78, 48, 114], [252, 120, 48, 54]]) + rects(SHADE.l, [[45, 102, 48, 132], [108, 144, 48, 90], [180, 192, 48, 42], [252, 174, 48, 60]]) },
  { name: '并排条', art: rects('#eee', [[111, 6, 6, 240], [222, 6, 6, 240]]) + rects('#cddbe8', [[30, 159, 24, 87], [141, 66, 24, 180], [249, 189, 24, 57]]) + rects('#e4f1fb', [[63, 111, 24, 135], [174, 135, 24, 111], [282, 102, 24, 144]]) },
  { name: '树状图', art: rects(SHADE.m, [[36, 36, 126, 90], [168, 36, 66, 60], [216, 102, 42, 60]]) + rects(SHADE.b, [[36, 132, 126, 84], [264, 168, 36, 24]]) + rects(SHADE.l, [[240, 36, 60, 60], [264, 102, 36, 60], [216, 168, 42, 48], [264, 198, 36, 18]]) + rects('#ff9d9a', [[168, 102, 42, 60]]) + rects('#e16358', [[168, 168, 42, 48]]) },
  { name: '圆视图', art: rings(SHADE.b, 29, [[67, 95], [67, 176], [172, 71], [172, 155]], 6) + rings(SHADE.m, 29, [[67, 70], [172, 181], [280, 70]], 6) + rings(SHADE.l, 29, [[278, 114], [278, 207], [173, 255]], 6) },
  { name: '并排圆', art: rects('#eee', [[168, 6, 6, 240]]) + rings('#cddbe8', 22, [[112, 83], [112, 212], [289, 87], [232, 176]]) + rings('#dae7f2', 22, [[55, 59], [55, 201], [289, 113]]) + rings('#e4f1fb', 22, [[55, 89], [112, 155], [232, 62], [232, 199], [289, 188]]) },
  { name: '线(连续)', art: poly(SHADE.y, '28,106 74,125 142,71 246,152 309,138') + poly(SHADE.o, '33,71 72,37 141,126 198,79 244,121 309,87') + poly(SHADE.b, '27,151 73,199 172,145 246,194 309,177') },
  { name: '线(离散)', on: true, art: rects('#d0d0d0', [[168, 12, 6, 228]]) + poly(SHADE.y, '23,145 68,136 107,93 146,122') + poly(SHADE.y, '186,145 229,128 269,140 313,116') + poly(SHADE.o, '23,103 67,114 105,71 149,75') + poly(SHADE.o, '192,103 230,57 265,85 312,73') + poly(SHADE.b, '25,187 67,200 104,164 149,164') + poly(SHADE.b, '191,188 230,160 266,179 313,163') },
  { name: '双线', art: axisTicks + poly('#fbdcc0', '56,88 109,39 161,83 196,64 253,103 290,73') + poly('#cddbe8', '56,139 108,117 160,177 196,155 254,185 290,139') },
  { name: '面积图(连续)', art: `<g transform="translate(18 46)">${stackedArea}</g>` },
  { name: '面积图(离散)', art: `<g transform="translate(18 46) scale(.48 1)">${stackedArea}</g><g transform="translate(174 46) scale(.48 1)">${stackedArea}</g>` },
  { name: '双组合', art: axisTicks + rects('#cddbe8', [[57, 135, 30, 99], [108, 105, 30, 129], [156, 159, 30, 75], [207, 48, 30, 186], [258, 129, 30, 105]]) + poly('#fbdcc0', '68,111 118,59 169,133 222,81 276,133') },
  { name: '散点图', art: rings('#fbdcc0', 22, [[51, 204], [84, 132], [135, 72], [153, 156], [255, 90]]) + `<path d="M183 48h54M210 21v54M162 111h54M189 84v54M252 147h54M279 120v54M189 183h54M216 156v54M81 192h54M108 165v54" stroke="#cde8dc" stroke-width="5"/>` },
  { name: '直方图', art: rects('#cde8dc', [[36, 210, 24, 18], [66, 180, 24, 48], [96, 126, 24, 102], [126, 66, 24, 162], [156, 42, 24, 186], [186, 66, 24, 162], [216, 126, 24, 102], [246, 180, 24, 48], [276, 210, 24, 18]]) },
  { name: '盒须图', art: boxPlot(60, 105, 129, 180, 63, 201) + boxPlot(135, 78, 129, 159, 51, 213) + boxPlot(210, 99, 147, 192, 45, 219) + boxPlot(285, 66, 135, 165, 33, 225) },
  { name: '甘特图', art: rects('#cde8dc', [[21, 24, 54, 48], [63, 99, 18, 48], [108, 99, 24, 48], [21, 174, 9, 48], [201, 174, 42, 48]]) + rects('#e2f3e8', [[21, 99, 36, 48], [150, 99, 87, 48], [138, 174, 24, 48]]) + rects('#fbdcc0', [[120, 24, 24, 48], [219, 24, 12, 48], [270, 99, 48, 48], [114, 174, 12, 48]]) + rects('#ffecda', [[150, 24, 24, 48], [252, 24, 48, 48], [54, 174, 51, 48], [276, 174, 24, 48]]) },
  { name: '标靶图', art: rects('#f5f5f5', [[33, 30, 186, 48], [33, 105, 120, 48], [33, 180, 102, 48]]) + rects('#fafafa', [[219, 30, 51, 48], [153, 105, 54, 48], [135, 180, 48, 48]]) + rects('#cde8dc', [[33, 42, 150, 24], [33, 117, 240, 24], [33, 192, 126, 24]]) + rects('#bbb', [[201, 30, 6, 48], [243, 105, 6, 48], [279, 180, 6, 48]]) },
  { name: '填充气泡图', art: dots([[93, 165, 57, SHADE.g], [99, 80, 21, SHADE.d], [157, 65, 31, SHADE.d], [215, 71, 19, SHADE.g], [274, 98, 41, SHADE.n], [185, 130, 35, SHADE.n], [242, 161, 23, SHADE.o], [182, 197, 26, SHADE.d]]) }
]

class ShowMe extends BaseElement {
  getStyles() {
    return `
      :host { width: 408px; color: #000; filter: drop-shadow(4px 5px 1px rgba(0, 0, 0, .3)); }
      .tab { position: relative; z-index: 1; display: flex; align-items: center; gap: 10px; width: 208px; height: 74px; margin: 0 0 -2px auto; padding: 0 20px 12px; background: var(--card); border: 2px solid #e1e1e1; border-bottom: 0; font-weight: 500; }
      .tab svg { width: 32px; height: 30px; }
      .body { background: var(--card); border: 2px solid #e1e1e1; padding: 28px 26px 0; min-height: 1118px; }
      .grid { display: grid; grid-template-columns: repeat(3, 112px); gap: 8px; }
      .grid button { height: 84px; border: 2px solid #e1e1e1; border-radius: 3px; background: #fff; overflow: hidden; }
      .grid .on { border: 4px solid #e06c36; }
      .grid svg { display: block; width: 100%; height: 100%; }
      text { font-size: 26px; fill: #444; }
      .help { padding: 32px 4px 0; }
      .help p { display: flex; align-items: center; height: 40px; }
      .help .date { margin: 10px 0 9px; }
      .date ui-icon { margin-left: 8px; }
      .pill { margin-bottom: 16px; gap: 8px; }
      field-pill { width: 96px; padding: 0 20px; }
    `
  }
  getTemplate() {
    return `
      <div class="tab">
        <svg><path d="M0 3h25" stroke="#856f98" stroke-width="6"/><path d="M0 11h32" stroke="#83a5cb" stroke-width="6"/><path d="M0 19h13" stroke="#f3a57c" stroke-width="6"/><path d="M0 27h19" stroke="#fb7080" stroke-width="6"/></svg>
        智能推荐
      </div>
      <div class="body">
        <div class="grid">${THUMBS.map(t => `<button class="${t.on ? 'on' : ''}" aria-label="${t.name}"><svg viewBox="${t.on ? '12 12 312 228' : '6 6 324 240'}">${t.art}</svg></button>`).join('')}</div>
        <div class="help">
          <p>对于线(离散)，尝试</p>
          <p class="date">1 个日期 <ui-icon name="calendar"></ui-icon></p>
          <p class="pill">0 个或多个<field-pill>维度</field-pill></p>
          <p class="pill">1 个或多个<field-pill kind="measure">度量</field-pill></p>
        </div>
      </div>
    `
  }
}
customElements.define('show-me', ShowMe)

/* ---------- sheet tabs and status ---------- */

class SheetTabs extends BaseElement {
  getStyles() {
    return `
      :host { display: flex; height: 61px; background: #e6e6e6; border: solid #c8c8c8; border-width: 1px 0 2px; color: #4a4a4a; }
      button { min-width: 120px; border-right: 2px solid #c8c8c8; padding: 0 12px; text-align: left; white-space: nowrap; }
      .source { width: 262px; display: flex; align-items: center; gap: 2px; padding: 0 6px; }
      .on { background: var(--card); }
      .new { min-width: 0; width: 64px; padding: 0 12px; }
    `
  }
  getTemplate() {
    return `
      <button class="source"><ui-icon name="db"></ui-icon>数据源</button>
      <button>工作表 1</button><button>电影票房折线图</button><button class="on">工作表 3</button>
      <button class="new" aria-label="新建工作表"><ui-icon name="tabSheet"></ui-icon></button>
      <button class="new" aria-label="新建仪表板"><ui-icon name="tabBoard"></ui-icon></button>
      <button class="new" aria-label="新建故事"><ui-icon name="tabStory"></ui-icon></button>
    `
  }
}
customElements.define('sheet-tabs', SheetTabs)

class StatusBar extends BaseElement {
  getStyles() {
    return `
      :host { position: relative; display: flex; align-items: center; height: 41px; padding-left: 24px; gap: 32px; background: #ebebeb; color: #000; font-size: 21px; }
      .cells { margin-left: auto; display: flex; align-self: stretch; }
      .cells > div { border-left: 2px solid #c8c8c8; display: flex; align-items: center; }
      .w1 { width: 254px; }
      .w2 { width: 54px; }
      .w3 { width: 94px; }
      .nav { width: 142px; padding: 0 16px; justify-content: space-between; }
      .views { width: 153px; padding-left: 16px; gap: 20px; }
      button { display: flex; }
      .mark { position: absolute; right: 10px; bottom: 6px; font: 16px/24px "Liberation Sans", sans-serif; color: rgba(255, 255, 255, .85); text-shadow: 1px 1px 1px rgba(0, 0, 0, .25); }
    `
  }
  getTemplate() {
    const svg = (w, h, d, c = '#bbb') => `<svg width="${w}" height="${h}" fill="${c}"><path d="${d}"/></svg>`
    return `
      <span>12 个标记</span><span>1 行依据12 列</span><span>计数(Sheet1) 的总和: 429</span>
      <div class="cells">
        <div class="w1"></div><div class="w2"></div><div class="w2"></div><div class="w3"></div>
        <div class="nav">
          <button aria-label="第一个">${svg(12, 14, 'M0 0h2v14H0zM12 0v14L4 7z')}</button>
          <button aria-label="上一个">${svg(7, 14, 'M7 0v14L0 7z')}</button>
          <button aria-label="下一个">${svg(7, 14, 'M0 0v14l7-7z')}</button>
          <button aria-label="最后一个">${svg(12, 14, 'M10 0h2v14h-2zM0 0v14l8-7z')}</button>
        </div>
        <div class="views">
          <button aria-label="缩略图">${svg(22, 22, 'M0 0h6v6H0zM8 0h6v6H8zM16 0h6v6h-6zM0 8h6v6H0zM8 8h6v6H8zM16 8h6v6h-6zM0 16h6v6H0zM8 16h6v6H8zM16 16h6v6h-6z')}</button>
          <button aria-label="胶片">${svg(22, 22, 'M0 0h22v14H0zM0 16h6v6H0zM8 16h6v6H8zM16 16h6v6h-6z')}</button>
          <button aria-label="标签">${svg(22, 22, 'M0 0h22v22H0z', '#666')}</button>
        </div>
      </div>
      <span class="mark">https://blog.csdn.net/qq_39633239</span>
    `
  }
}
customElements.define('status-bar', StatusBar)

/* ---------- page ---------- */

class WorkbookApp extends BaseElement {
  getStyles() {
    return `
      :host { position: relative; display: flex; flex-direction: column; min-height: 100vh; }
      main { flex: 1; display: flex; align-items: stretch; }
      show-me { position: absolute; right: 8px; top: 8px; z-index: 3; }
    `
  }
  getTemplate() {
    return `
      <tool-bar></tool-bar>
      <main>
        <data-pane></data-pane>
        <card-column></card-column>
        <work-space></work-space>
      </main>
      <sheet-tabs></sheet-tabs>
      <status-bar></status-bar>
      <show-me></show-me>
    `
  }
}
customElements.define('workbook-app', WorkbookApp)
</script>
</body>
</html>
